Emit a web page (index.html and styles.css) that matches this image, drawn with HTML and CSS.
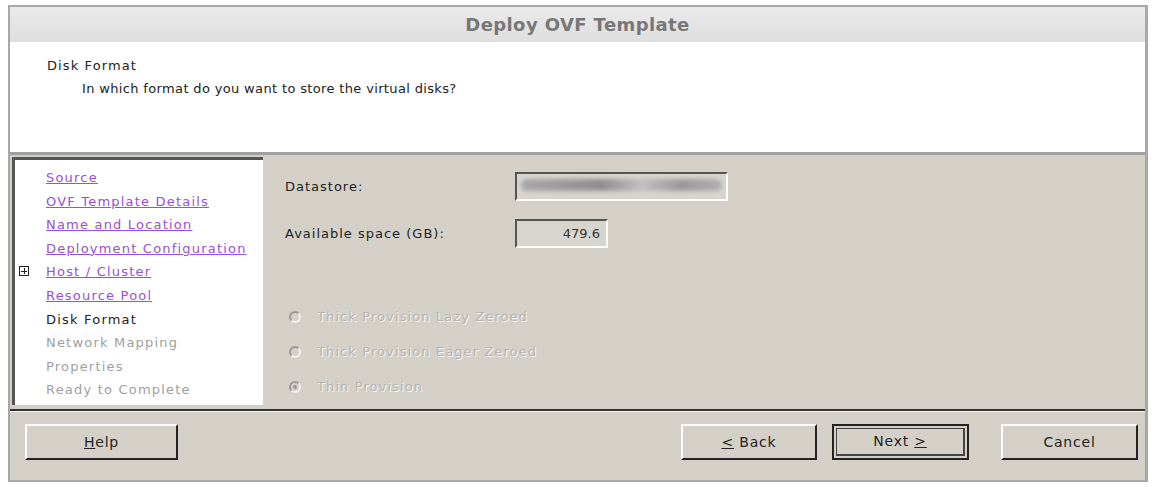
FILE: index.html
```html
<!DOCTYPE html>
<html lang="en">

<head>
    <meta charset="UTF-8">
    <title>Deploy OVF Template</title>
    <link rel="stylesheet" href="styles.css">
</head>

<body>
    <div class="dialog">
        <div class="titlebar">Deploy OVF Template</div>

        <div class="header">
            <div class="step-title">Disk Format</div>
            <div class="step-desc">In which format do you want to store the virtual disks?</div>
        </div>

        <div class="main">
            <ul class="nav">
                <li><a href="#">Source</a></li>
                <li><a href="#">OVF Template Details</a></li>
                <li><a href="#">Name and Location</a></li>
                <li><a href="#">Deployment Configuration</a></li>
                <li class="has-toggle"><span class="toggle"></span><a href="#">Host / Cluster</a></li>
                <li><a href="#">Resource Pool</a></li>
                <li class="current">Disk Format</li>
                <li class="pending">Network Mapping</li>
                <li class="pending">Properties</li>
                <li class="pending">Ready to Complete</li>
            </ul>

            <div class="content">
                <div class="field-row">
                    <label>Datastore:</label>
                    <div class="field wide"><span class="blur"></span></div>
                </div>
                <div class="field-row">
                    <label>Available space (GB):</label>
                    <div class="field narrow">479.6</div>
                </div>

                <div class="options">
                    <div class="option"><span class="radio"></span>Thick Provision Lazy Zeroed</div>
                    <div class="option"><span class="radio"></span>Thick Provision Eager Zeroed</div>
                    <div class="option"><span class="radio checked"></span>Thin Provision</div>
                </div>
            </div>
        </div>

        <div class="footer">
            <button class="btn"><u>H</u>elp</button>
            <div class="spacer"></div>
            <button class="btn back"><u>&lt;</u> Back</button>
            <button class="btn default"><span class="focus">Next <u>&gt;</u></span></button>
            <button class="btn cancel">Cancel</button>
        </div>
    </div>
</body>

</html>
```

FILE: styles.css
```css
/* Basic Reset */
* {
    margin: 0;
    padding: 0;
    box-sizing: border-box;
}

body {
    font-family: 'DejaVu Sans', sans-serif;
    font-size: 13px;
    color: #222;
    background: #fff;
}

.dialog {
    margin: 5px 0 0 8px;
    width: 1140px;
    height: 477px;
    border: 2px solid #a8a8a8;
    border-right-width: 3px;
    background-color: #d4d0c8;
    display: flex;
    flex-direction: column;
}

.titlebar {
    height: 35px;
    background: linear-gradient(#eaeaea, #dedede);
    color: #777;
    font-weight: bold;
    font-size: 18px;
    text-align: center;
    line-height: 35px;
    letter-spacing: 0.4px;
}

.header {
    height: 113px;
    background-color: #fff;
    border-bottom: 3px solid #a0a0a0;
    padding: 16px 0 0 37px;
}

.step-title {
    font-size: 13px;
    letter-spacing: 1.1px;
    color: #222;
}

.step-desc {
    margin: 8px 0 0 35px;
    font-size: 13px;
    letter-spacing: 0.35px;
    color: #222;
}

/* Main area */
.main {
    display: flex;
    height: 256px;
    padding: 2px 0 0 2px;
    border-bottom: 2px solid #333;
}

.nav {
    list-style: none;
    width: 251px;
    height: 248px;
    background-color: #fff;
    border-top: 3px solid #555;
    border-left: 3px solid #555;
    padding: 8px 0 0 31px;
}

.nav li {
    height: 23.6px;
    line-height: 20px;
    font-size: 13px;
    letter-spacing: 1.2px;
    position: relative;
}

.nav a {
    color: #9a4fd8;
    text-decoration: underline;
}

.nav .current {
    color: #222;
}

.nav .pending {
    color: #a0a0a0;
}

.toggle {
    position: absolute;
    left: -27px;
    top: 4px;
    width: 10px;
    height: 10px;
    border: 1px solid #222;
    background:
        linear-gradient(#222, #222) center / 6px 1px no-repeat,
        linear-gradient(#222, #222) center / 1px 6px no-repeat;
}

.content {
    flex: 1;
    padding: 14px 0 0 22px;
}

.field-row {
    display: flex;
    align-items: center;
    height: 30px;
    margin-bottom: 17px;
}

.field-row label {
    width: 230px;
    letter-spacing: 1px;
    color: #222;
}

.field {
    height: 29px;
    border-top: 2px solid #555;
    border-left: 2px solid #555;
    border-right: 2px solid #fff;
    border-bottom: 2px solid #fff;
    background-color: #d8d5ce;
}

.field.wide {
    width: 213px;
    padding: 5px 4px;
}

.field.narrow {
    width: 93px;
    text-align: right;
    padding: 0 6px;
    line-height: 25px;
    color: #333;
}

.blur {
    display: block;
    height: 12px;
    border-radius: 6px;
    background: linear-gradient(90deg, #a8a8a8, #8e8e8e 40%, #c0c0c0 60%, #999 80%, #b0b0b0);
    filter: blur(2px);
}

.options {
    margin-top: 51px;
    margin-left: 4px;
}

.option {
    display: flex;
    align-items: center;
    height: 35px;
    letter-spacing: 1.1px;
    color: #b4b4b4;
    text-shadow: 1px 1px 0 #f4f4f4;
}

.radio {
    width: 12px;
    height: 12px;
    border-radius: 50%;
    border: 2px solid #999;
    border-right-color: #f0f0f0;
    border-bottom-color: #f0f0f0;
    margin-right: 16px;
    position: relative;
}

.radio.checked::after {
    content: "";
    position: absolute;
    left: 2px;
    top: 2px;
    width: 4px;
    height: 4px;
    border-radius: 50%;
    background-color: #999;
}

/* Footer buttons */
.footer {
    flex: 1;
    display: flex;
    align-items: flex-start;
    padding: 12px 0 0 15px;
    border-top: 1px solid #f4f4f4;
}

.spacer {
    flex: 1;
}

.btn {
    width: 153px;
    height: 36px;
    font-family: 'DejaVu Sans', sans-serif;
    font-size: 14px;
    letter-spacing: 0.8px;
    color: #222;
    background-color: #d4d0c8;
    border-top: 2px solid #fff;
    border-left: 2px solid #fff;
    border-right: 2px solid #222;
    border-bottom: 2px solid #222;
    margin-right: 15px;
}

.btn.back {
    width: 136px;
}

.btn.default {
    width: 137px;
    border: 2px solid #222;
    padding: 2px;
    margin-right: 32px;
}

.btn.default .focus {
    display: block;
    height: 100%;
    line-height: 24px;
    border: 1px solid #444;
    border-right-width: 2px;
    border-bottom-width: 2px;
}

.btn.cancel {
    width: 137px;
    margin-right: 7px;
}
```
